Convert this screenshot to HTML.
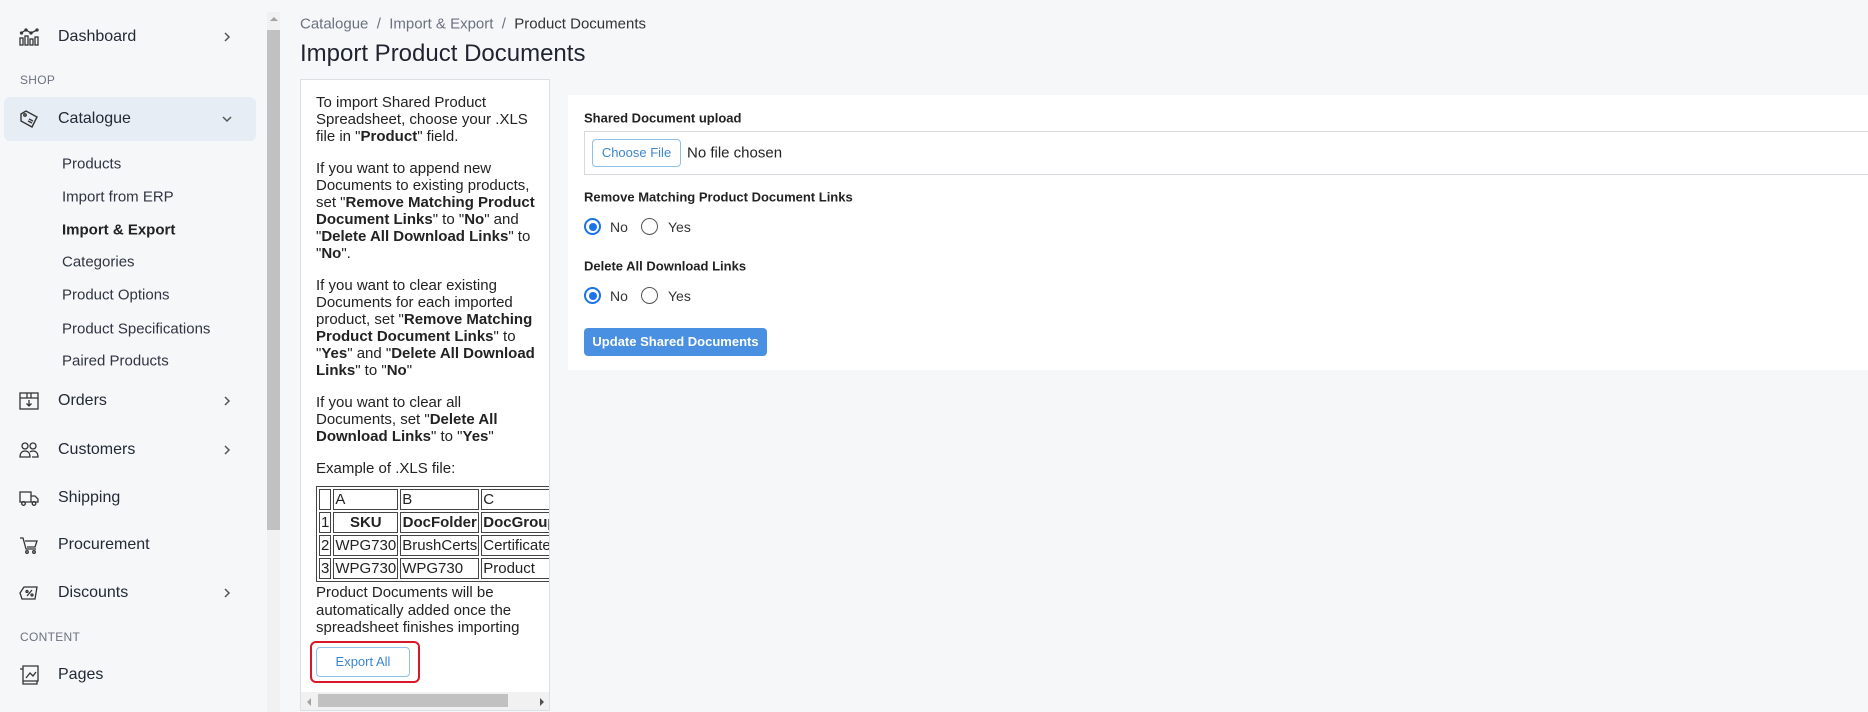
<!DOCTYPE html>
<html><head><meta charset="utf-8"><style>
*{box-sizing:border-box;margin:0;padding:0}
body{width:1868px;height:712px;overflow:hidden;background:#f6f7f9;font-family:"Liberation Sans",sans-serif;color:#1f2430;position:relative}
.abs{position:absolute}
.sb{left:0;top:0;width:264px;height:712px;background:#f6f7f9}
.item{position:absolute;left:58px;font-size:16px;color:#222a36;transform:translateY(-50%)}
.ico{position:absolute;left:19px;width:20px;height:20px;transform:translateY(-50%)}
.chev{position:absolute;left:222px;width:10px;height:10px;transform:translateY(-50%)}
.sec{position:absolute;left:20px;font-size:12px;color:#6b7280;transform:translateY(-50%);letter-spacing:.3px}
.sub{position:absolute;left:62px;font-size:15px;color:#2f3542;transform:translateY(-50%)}
.lp{left:300px;top:79px;width:250px;height:632px;background:#fff;border:1px solid #dcdfe3;overflow:hidden}
.lp .txt{position:absolute;left:15px;top:14px;width:224px;font-size:15px;line-height:17px;color:#222}
.lp p{margin-bottom:15px}
table{border:1px solid #444;border-spacing:2px;font-size:15px;white-space:nowrap}
td{border:1px solid #444;padding:0 1px;height:21px;line-height:19px}
.rb{display:inline-block;width:17px;height:17px;border-radius:50%;border:1.5px solid #555;vertical-align:middle;position:absolute}
.rb.on{border:2px solid #1a73e8}
.rb.on::after{content:"";position:absolute;left:2.5px;top:2.5px;width:8px;height:8px;border-radius:50%;background:#1a73e8}
.lbl{position:absolute;left:584px;font-size:13px;font-weight:bold;color:#222;transform:translateY(-50%)}
.rt{position:absolute;font-size:14px;color:#333;transform:translateY(-50%)}
</style></head><body>
<div class="abs sb">
<svg class="ico" style="top:37px" viewBox="0 0 20 20" fill="none" stroke="#333" stroke-width="1.3"><rect x="1" y="11" width="3" height="7"/><rect x="6" y="9" width="3" height="9"/><rect x="11" y="12" width="3" height="6"/><rect x="16" y="10" width="3" height="8"/><path d="M2 6l5-3 5 3 6-3"/><circle cx="2.5" cy="6" r="1"/><circle cx="7" cy="3" r="1"/><circle cx="12" cy="6" r="1"/><circle cx="18" cy="3" r="1"/></svg>
<div class="item" style="top:37px">Dashboard</div>
<svg class="chev" style="top:37px" viewBox="0 0 10 10" fill="none" stroke="#555" stroke-width="1.5"><path d="M3 1l4 4-4 4"/></svg>
<div class="sec" style="top:80px">SHOP</div>
<div class="abs" style="left:4px;top:97px;width:252px;height:44px;background:#e6edf5;border-radius:6px"></div>
<svg class="ico" style="top:119px" viewBox="0 0 20 20" fill="none" stroke="#333" stroke-width="1.4"><path d="M2 5l5-3 11 6-5 10L2 12z"/><circle cx="6" cy="6" r="1.2"/><path d="M9 12l4 2M10 10l4 2"/></svg>
<div class="item" style="top:119px">Catalogue</div>
<svg class="chev" style="top:119px" viewBox="0 0 10 10" fill="none" stroke="#555" stroke-width="1.5"><path d="M1 3l4 4 4-4"/></svg>
<div class="sub" style="top:164px">Products</div>
<div class="sub" style="top:197px">Import from ERP</div>
<div class="sub" style="top:230px;font-weight:bold;color:#222">Import &amp; Export</div>
<div class="sub" style="top:262px">Categories</div>
<div class="sub" style="top:295px">Product Options</div>
<div class="sub" style="top:329px">Product Specifications</div>
<div class="sub" style="top:361px">Paired Products</div>
<svg class="ico" style="top:401px" viewBox="0 0 20 20" fill="none" stroke="#333" stroke-width="1.3"><rect x="1" y="2" width="18" height="16"/><path d="M1 7h18M8 2v5M12 2v5M10 9v6M7.5 12.5L10 15l2.5-2.5"/></svg>
<div class="item" style="top:401px">Orders</div>
<svg class="chev" style="top:401px" viewBox="0 0 10 10" fill="none" stroke="#555" stroke-width="1.5"><path d="M3 1l4 4-4 4"/></svg>
<svg class="ico" style="top:450px" viewBox="0 0 20 20" fill="none" stroke="#333" stroke-width="1.3"><circle cx="6" cy="6" r="3"/><circle cx="14" cy="6" r="3"/><path d="M1 17c0-4 2-6 5-6s5 2 5 6zM11 12c1-1 2-1 3-1 3 0 5 2 5 6h-6"/></svg>
<div class="item" style="top:450px">Customers</div>
<svg class="chev" style="top:450px" viewBox="0 0 10 10" fill="none" stroke="#555" stroke-width="1.5"><path d="M3 1l4 4-4 4"/></svg>
<svg class="ico" style="top:498px" viewBox="0 0 20 20" fill="none" stroke="#333" stroke-width="1.3"><path d="M1 4h11v10H1zM12 8h4l3 3v3h-7"/><circle cx="4.5" cy="15.5" r="1.8"/><circle cx="15" cy="15.5" r="1.8"/></svg>
<div class="item" style="top:498px">Shipping</div>
<svg class="ico" style="top:545px" viewBox="0 0 20 20" fill="none" stroke="#333" stroke-width="1.3"><path d="M1 3h3l3 11h10M6 6h12l-2 6H8"/><circle cx="8" cy="17" r="1.3"/><circle cx="15" cy="17" r="1.3"/></svg>
<div class="item" style="top:545px">Procurement</div>
<svg class="ico" style="top:593px" viewBox="0 0 20 20" fill="none" stroke="#333" stroke-width="1.3"><path d="M1 10l4-6h13l-2 12H3z"/><path d="M8 13l5-6"/><circle cx="8" cy="8.5" r="1"/><circle cx="13" cy="12" r="1"/></svg>
<div class="item" style="top:593px">Discounts</div>
<svg class="chev" style="top:593px" viewBox="0 0 10 10" fill="none" stroke="#555" stroke-width="1.5"><path d="M3 1l4 4-4 4"/></svg>
<div class="sec" style="top:637px">CONTENT</div>
<svg class="ico" style="top:675px" viewBox="0 0 20 20" fill="none" stroke="#333" stroke-width="1.3"><path d="M1 4h3v15h14v-3M4 1h15v15H4z"/><path d="M7 13l4-5 3 3 3-4"/></svg>
<div class="item" style="top:675px">Pages</div>
</div>
<div class="abs" style="left:267px;top:12px;width:13px;height:700px;background:#f1f1f1"></div>
<div class="abs" style="left:270px;top:17px;width:0;height:0;border-left:4px solid transparent;border-right:4px solid transparent;border-bottom:4px solid #a3a3a3"></div>
<div class="abs" style="left:267px;top:30px;width:13px;height:500px;background:#c1c1c1"></div>

<div class="abs" style="left:300px;top:24px;transform:translateY(-50%);font-size:15px;color:#6b7280">Catalogue &nbsp;/&nbsp; Import &amp; Export &nbsp;/&nbsp; <span style="color:#333">Product Documents</span></div>
<div class="abs" style="left:300px;top:54px;transform:translateY(-50%);font-size:24px;color:#1f2430">Import Product Documents</div>

<div class="abs lp">
<div class="txt">
<p>To import Shared Product Spreadsheet, choose your .XLS file in "<b>Product</b>" field.</p>
<p>If you want to append new Documents to existing products, set "<b>Remove Matching Product Document Links</b>" to "<b>No</b>" and "<b>Delete All Download Links</b>" to "<b>No</b>".</p>
<p>If you want to clear existing Documents for each imported product, set "<b>Remove Matching Product Document Links</b>" to "<b>Yes</b>" and "<b>Delete All Download Links</b>" to "<b>No</b>"</p>
<p>If you want to clear all Documents, set "<b>Delete All Download Links</b>" to "<b>Yes</b>"</p>
<p style="margin-bottom:9px">Example of .XLS file:</p>
<table>
<tr><td style="width:14px"></td><td style="width:58px">A</td><td style="width:77px">B</td><td style="width:100px">C</td></tr>
<tr><td>1</td><td style="text-align:center"><b>SKU</b></td><td style="text-align:center"><b>DocFolder</b></td><td><b>DocGroupType</b></td></tr>
<tr><td>2</td><td>WPG730</td><td>BrushCerts</td><td>Certificate</td></tr>
<tr><td>3</td><td>WPG730</td><td>WPG730</td><td>Product</td></tr>
</table>
</div>
<div class="abs" style="left:15px;top:504px;width:225px;font-size:15px;line-height:17.6px;color:#222;background:#fff">Product Documents will be automatically added once the spreadsheet finishes importing</div>
<div class="abs" style="left:9px;top:561px;width:110px;height:42px;border:2px solid #d9182a;border-radius:6px"></div>
<div class="abs" style="left:15px;top:567px;width:94px;height:30px;border:1px solid #8ec0ea;border-radius:4px;color:#3a87d0;font-size:13px;text-align:center;line-height:28px">Export All</div>
<div class="abs" style="left:0;top:612px;width:250px;height:20px;background:#f1f1f1"></div>
<div class="abs" style="left:6px;top:618px;width:0;height:0;border-top:4px solid transparent;border-bottom:4px solid transparent;border-right:4px solid #a3a3a3"></div>
<div class="abs" style="left:239px;top:618px;width:0;height:0;border-top:4px solid transparent;border-bottom:4px solid transparent;border-left:4px solid #505050"></div>
<div class="abs" style="left:17px;top:614px;width:190px;height:13px;background:#c1c1c1"></div>
</div>

<div class="abs" style="left:568px;top:95px;width:1300px;height:275px;background:#fff"></div>
<div class="lbl" style="top:118px">Shared Document upload</div>
<div class="abs" style="left:584px;top:131px;width:1290px;height:44px;border:1px solid #d6d9dd"></div>
<div class="abs" style="left:592px;top:139px;width:89px;height:28px;border:1px solid #8ec0ea;border-radius:4px;background:#fff;color:#3a87d0;font-size:13px;text-align:center;line-height:26px">Choose File</div>
<div class="rt" style="left:687px;top:153px;font-size:15px;color:#222">No file chosen</div>
<div class="lbl" style="top:197px">Remove Matching Product Document Links</div>
<span class="rb on" style="left:584px;top:218px"></span><div class="rt" style="left:610px;top:227px">No</div>
<span class="rb" style="left:641px;top:218px"></span><div class="rt" style="left:668px;top:227px">Yes</div>
<div class="lbl" style="top:266px">Delete All Download Links</div>
<span class="rb on" style="left:584px;top:287px"></span><div class="rt" style="left:610px;top:296px">No</div>
<span class="rb" style="left:641px;top:287px"></span><div class="rt" style="left:668px;top:296px">Yes</div>
<div class="abs" style="left:584px;top:328px;width:183px;height:28px;background:#4a90e2;border-radius:4px;color:#fff;font-size:13px;font-weight:bold;text-align:center;line-height:28px">Update Shared Documents</div>
</body></html>
